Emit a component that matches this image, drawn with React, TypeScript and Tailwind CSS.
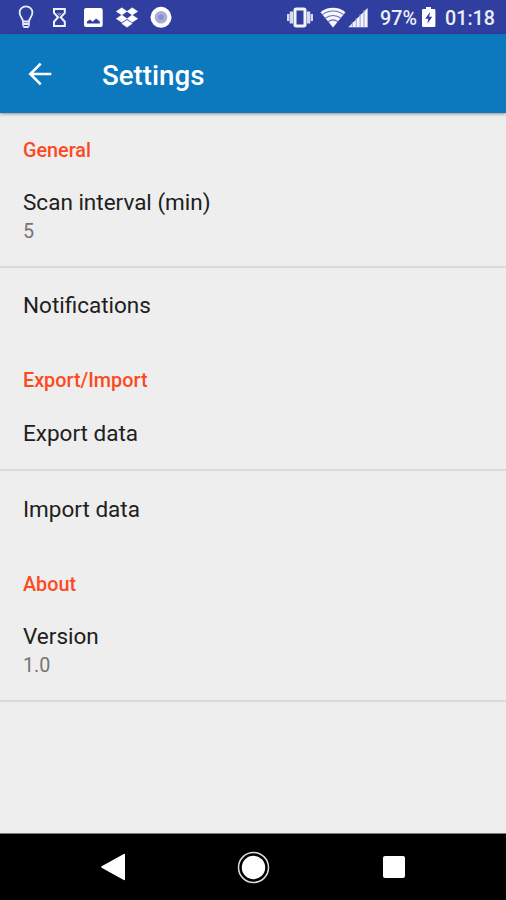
import type { ReactNode } from "react";

function StatusBar() {
  return (
    <header className="flex h-[34px] shrink-0 items-center bg-[#303f9f] text-white">
      <svg className="ml-[17px] shrink-0" width="18" height="34" viewBox="0 0 18 34" fill="none" stroke="#e9ebfa" strokeWidth="1.8">
        <path d="M6 21.5C5.8 18.5 2.6 16.5 2.6 12.4a6.4 6 0 0 1 12.8 0c0 4.1-3.2 6.1-3.4 9.1z" />
        <path d="M5.8 24h6.4M6.4 27h5.2" strokeWidth="2" />
        <path d="M6 21.5v5M12 21.5v5" strokeWidth="1.4" />
      </svg>
      <svg className="ml-[16px] shrink-0" width="16" height="34" viewBox="0 0 16 34" fill="none" stroke="#f2f3fc" strokeWidth="2">
        <path d="M3 8.9h10.8v4L9.7 17.3l4.1 4.4v4.2H3v-4.2l4.1-4.4L3 12.9z" />
        <path d="M5.6 13h5.6L8.4 16z" fill="#f2f3fc" stroke="none" opacity=".4" />
      </svg>
      <svg className="ml-[16px] shrink-0" width="20" height="34" viewBox="0 0 20 34">
        <rect x="1" y="8" width="18.7" height="19" rx="2" fill="#fff" />
        <path d="M4 23.4v-1.8l3-2.2 2.6 2.4 3.5-3.2 3.7 3v1.8z" fill="#303f9f" />
      </svg>
      <svg className="ml-[12px] shrink-0" width="24" height="34" viewBox="0 0 24 34" fill="#fff" stroke="#fff" strokeWidth=".5">
        <path d="M6.8 7.8l5.2 3.6-5.2 3.6-5.5-3.6zM17.2 7.8l5.5 3.6-5.5 3.6-5.2-3.6zM6.8 15l5.2 3.7-5.2 3.6-5.5-3.6zM17.2 15l5.5 3.7-5.5 3.6-5.2-3.6zM12 20.2l5.2 3.4-5.2 3.6-5.2-3.6z" />
      </svg>
      <svg className="ml-[11px] shrink-0" width="22" height="34" viewBox="0 0 22 34">
        <circle cx="11" cy="17.3" r="10.5" fill="#fff" />
        <circle cx="11" cy="17.3" r="6.3" fill="#a8addb" />
        <circle cx="11" cy="17.3" r="2.7" fill="#8990c9" />
      </svg>

      <svg className="ml-auto shrink-0" width="28" height="34" viewBox="0 0 28 34">
        <rect x="9" y="9" width="10" height="17" rx="1.2" fill="none" stroke="#f4f5fc" strokeWidth="3" />
        <path d="M5.4 11.5v12M22.6 11.5v12" stroke="#d8dbf2" strokeWidth="3.4" />
        <path d="M2.2 14v7M25.8 14v7" stroke="#d8dbf2" strokeWidth="2.4" />
      </svg>
      <svg className="ml-[6px] shrink-0" width="26" height="34" viewBox="0 0 26 34">
        <path d="M.5 12.2C7.5 6.3 18.5 6.3 25.5 12.2L13 27.5z" fill="#f6f7fd" />
        <path d="M2.4 14.7c6-5 15.2-5 21.2 0M5.2 18.2c4.5-3.7 11.1-3.7 15.6 0M8.1 21.7c2.9-2.2 6.9-2.2 9.8 0" fill="none" stroke="#626cb7" strokeWidth="1.1" />
      </svg>
      <svg className="ml-[2px] shrink-0" width="20" height="34" viewBox="0 0 20 34">
        <path d="M.3 27.2L19.6 8v19.2z" fill="#f3f4fc" />
        <path d="M4.3 22v5.5M8.2 18v9.5M12.1 14v13.5M16 10v17.5" stroke="#939bd0" strokeWidth="1" />
      </svg>
      <span className="ml-[12px] w-[38px] pt-[3px] text-[19.7px] leading-[34px] font-medium whitespace-nowrap text-[#eceefa]">97%</span>
      <svg className="ml-[3px] shrink-0" width="16" height="34" viewBox="0 0 16 34">
        <path d="M5 7h5v2h3.2q1.2 0 1.2 1.2v15.6q0 1.2-1.2 1.2H2.2Q1 27 1 25.8V10.2Q1 9 2.2 9H5z" fill="#fff" />
        <path d="M9.2 11.8l-5 7h3.1l-1 5 5-7H8.1z" fill="#303f9f" />
      </svg>
      <span className="mr-[11px] ml-[8px] w-[50px] pt-[3px] text-[19.7px] leading-[34px] font-medium whitespace-nowrap text-[#eceefa]">01:18</span>
    </header>
  );
}

function Toolbar() {
  return (
    <div className="relative flex h-[79px] shrink-0 items-center bg-[#0c78be] text-white shadow-[0_1px_3px_rgba(0,0,0,0.4)]">
      <button className="ml-[28px] flex" aria-label="Back">
        <svg width="24" height="24" viewBox="0 0 24 24" fill="none" stroke="#fff" strokeWidth="2.6">
          <path d="M23.3 12H3M12.7 1.6L2.3 12l10.4 10.4" />
        </svg>
      </button>
      <h1 className="ml-[50px] pt-[5px] text-[27.7px] leading-[34px] font-medium">Settings</h1>
    </div>
  );
}

function Category({ children }: { children: ReactNode }) {
  return <h2 className="pl-[23px] text-[19.8px] leading-[24px] font-medium text-[#fc4a1f]">{children}</h2>;
}

function Preference({ title, summary }: { title: string; summary?: string }) {
  return (
    <div className="pl-[23px]">
      <p className="text-[22.5px] leading-[28px] text-[#202020]">{title}</p>
      {summary && <p className="pt-[3px] text-[19.7px] leading-[26px] text-[#757575]">{summary}</p>}
    </div>
  );
}

export default function App() {
  return (
    <div className="flex h-[900px] w-[506px] flex-col overflow-hidden bg-[#eeeeee] font-['Roboto',sans-serif]">
      <StatusBar />
      <Toolbar />
      <main className="flex-1">
        <section className="h-[155px] border-b-2 border-[#dadada] pt-[26px]">
          <Category>General</Category>
          <div className="pt-[25px]">
            <Preference title="Scan interval (min)" summary="5" />
          </div>
        </section>
        <section className="pt-[23px]">
          <Preference title="Notifications" />
        </section>
        <section className="h-[152px] border-b-2 border-[#dadada] pt-[50px]">
          <Category>Export/Import</Category>
          <div className="pt-[26px]">
            <Preference title="Export data" />
          </div>
        </section>
        <section className="pt-[24px]">
          <Preference title="Import data" />
        </section>
        <section className="h-[179px] border-b-2 border-[#dadada] pt-[50px]">
          <Category>About</Category>
          <div className="pt-[25px]">
            <Preference title="Version" summary="1.0" />
          </div>
        </section>
      </main>
      <nav className="flex h-[67px] shrink-0 items-center border-t border-[#777777] bg-black">
        <svg className="ml-[100px]" width="26" height="28" viewBox="0 0 26 28">
          <path d="M2 14L24.2 1.6v24.8z" fill="#fff" stroke="#fff" strokeWidth="1.6" strokeLinejoin="round" />
        </svg>
        <svg className="ml-[111px]" width="33" height="33" viewBox="0 0 33 33">
          <circle cx="16.5" cy="16.5" r="15" fill="none" stroke="#ddd" strokeWidth="1.5" />
          <circle cx="16.5" cy="16.5" r="11.7" fill="#fff" />
        </svg>
        <span className="ml-[113px] h-[22px] w-[22px] rounded-[2px] bg-white" />
      </nav>
    </div>
  );
}
